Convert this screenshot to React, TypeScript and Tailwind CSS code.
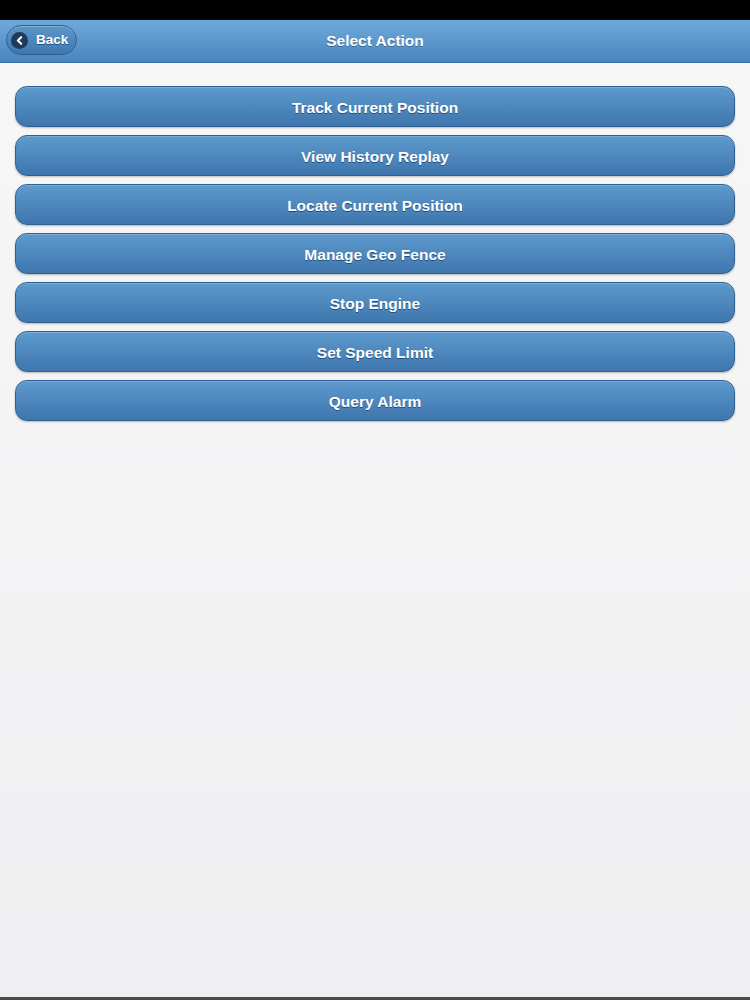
import { ChevronLeft } from "lucide-react";

const actions = [
  "Track Current Position",
  "View History Replay",
  "Locate Current Position",
  "Manage Geo Fence",
  "Stop Engine",
  "Set Speed Limit",
  "Query Alarm",
];

export default function App() {
  return (
    <div className="flex h-[1000px] w-[750px] flex-col overflow-hidden bg-[#efeff1] font-['Liberation_Sans',Arial,sans-serif]">
      {/* Status bar */}
      <div className="h-[20px] shrink-0 bg-black" />

      {/* Header */}
      <div className="relative flex h-[43px] shrink-0 items-center justify-center border-b border-[#3c6e9e] bg-gradient-to-b from-[#6eaad9] to-[#4a86bf]">
        <button className="absolute left-[6px] top-[5px] flex h-[30px] w-[71px] items-center gap-[8px] rounded-full border border-[#2f6091] bg-gradient-to-b from-[#5b97ca] to-[#3f78b0] pl-[4px] shadow-[inset_0_1px_0_rgba(255,255,255,0.25)]">
          <span className="flex h-[17px] w-[17px] items-center justify-center rounded-full bg-[#1e3b5b]">
            <ChevronLeft className="h-[13px] w-[13px] text-white" strokeWidth={4} />
          </span>
          <span className="text-[13.5px] font-bold text-white [text-shadow:0_1px_0_#1f4f80]">Back</span>
        </button>
        <h1 className="text-[15.5px] font-bold text-white [text-shadow:0_1px_0_#3a6790]">Select Action</h1>
      </div>

      {/* Actions */}
      <div className="flex flex-1 flex-col bg-gradient-to-b from-[#f7f7f8] to-[#efeff1] px-[15px] pt-[23px]">
        <div className="flex flex-col gap-[8px]">
          {actions.map((a) => (
            <button
              key={a}
              className="flex h-[41px] items-center justify-center rounded-[12px] border border-[#2f6091] bg-gradient-to-b from-[#5e9acd] to-[#3e76ad] pt-[2px] text-[15.5px] font-bold text-white shadow-[0_1px_2px_rgba(0,0,0,0.25),inset_0_1px_0_rgba(255,255,255,0.2)] [text-shadow:0_1px_0_#1f4f80]"
            >
              {a}
            </button>
          ))}
        </div>
      </div>

      {/* Bottom edge */}
      <div className="h-[3px] shrink-0 bg-[#4a4a4a]" />
    </div>
  );
}
